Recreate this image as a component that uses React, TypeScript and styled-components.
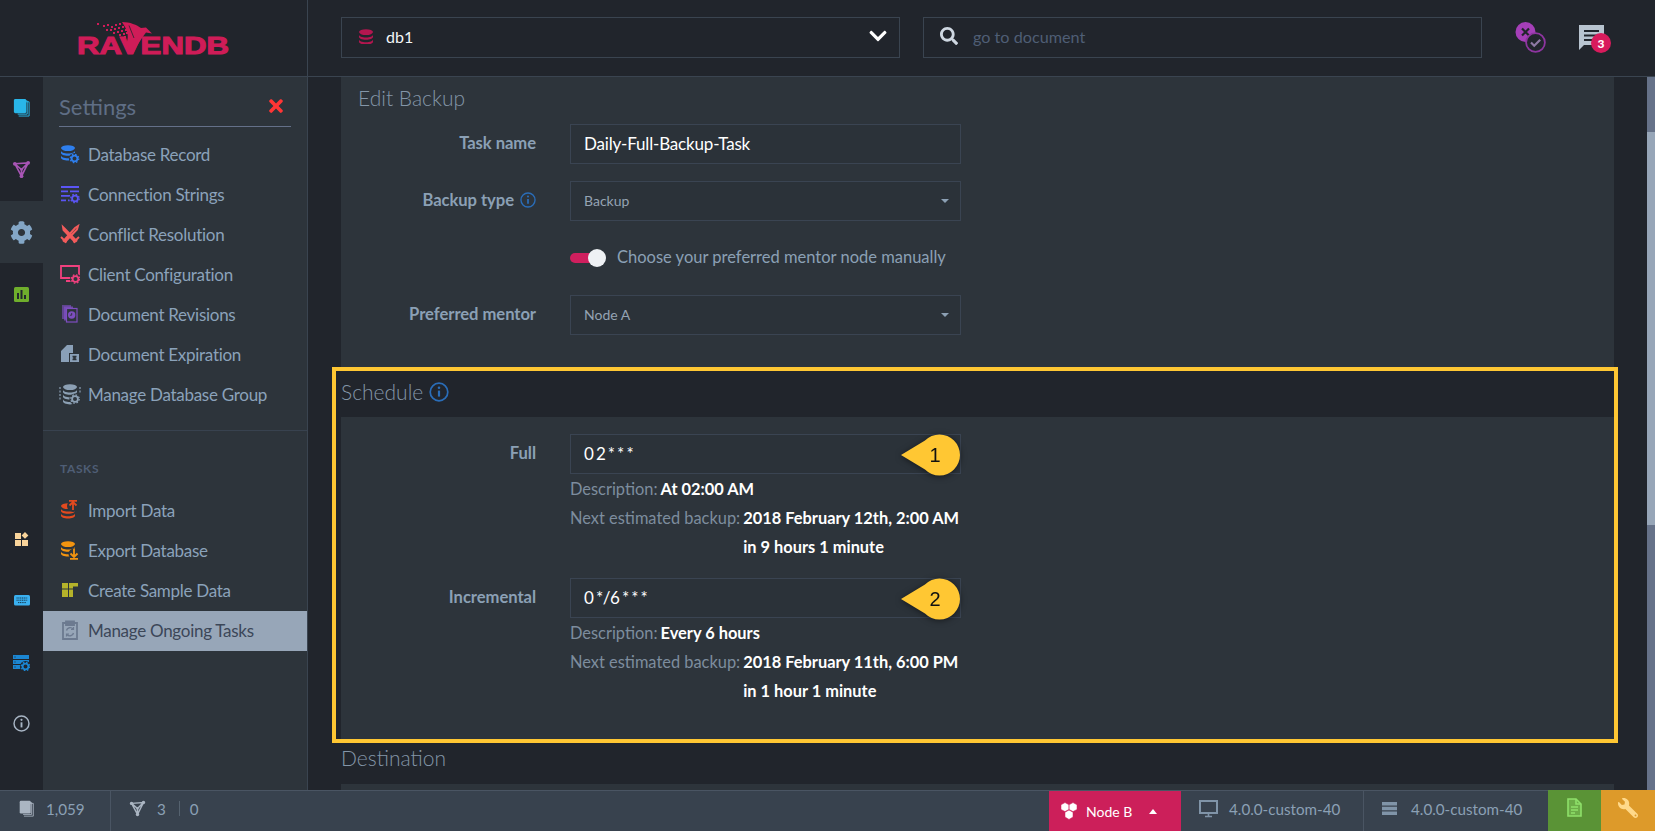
import React from 'react';
import styled, { createGlobalStyle } from 'styled-components';
import { FaCog, FaSearch, FaWrench, FaChevronDown, FaTimes } from 'react-icons/fa';

const dark = '#21252c';
const panel = '#2d343b';
const line = '#3a4450';
const bar = '#38424e';

const GlobalStyle = createGlobalStyle`
  html, body {
    margin: 0;
    height: 100%;
    overflow: hidden;
    background: ${dark};
    font-family: Lato, "Liberation Sans", sans-serif;
  }
  * { box-sizing: border-box; }
`;

const Page = styled.div`
  display: flex;
  flex-direction: column;
  height: 831px;
  width: 1655px;
`;

const TopBar = styled.header`
  display: flex;
  height: 77px;
  flex: none;
  border-bottom: 1px solid ${line};
`;

const LogoBox = styled.div`
  width: 308px;
  flex: none;
  border-right: 1px solid ${line};
`;

const TopTools = styled.div`
  flex: 1;
  display: flex;
  gap: 23px;
  padding: 17px 0 0 33px;
`;

const TopField = styled.div`
  width: 559px;
  height: 41px;
  display: flex;
  align-items: center;
  border: 1px solid ${line};
  padding-bottom: 3px;
`;

const DbName = styled.span`
  flex: 1;
  color: #f4f6f8;
  font-size: 16px;
  padding-left: 12px;
`;

const SearchText = styled.span`
  color: #4f5e75;
  font-size: 16.2px;
  padding-left: 15px;
`;

const Chevron = styled(FaChevronDown)`
  color: #fff;
  font-size: 20px;
  margin-right: 11px;
`;

const SearchIcon = styled(FaSearch)`
  color: #cfd8e2;
  font-size: 18px;
  margin-left: 16px;
`;

const TopIcons = styled.div`
  display: flex;
  align-items: flex-start;
  gap: 32px;
  padding: 4px 0 0 8px;
`;

const BubbleWrap = styled.div`
  position: relative;
  width: 32px;
  height: 28px;
  margin-top: 4px;
`;

const Badge = styled.span`
  position: absolute;
  right: 0;
  bottom: 0;
  width: 20px;
  height: 20px;
  border-radius: 50%;
  background: #d81b5c;
  color: #fff;
  font-size: 12px;
  font-weight: 900;
  display: flex;
  align-items: center;
  justify-content: center;
`;

const Middle = styled.div`
  flex: 1;
  min-height: 0;
  display: flex;
`;

const Rail = styled.nav`
  width: 43px;
  flex: none;
  display: flex;
  flex-direction: column;
  background: ${dark};
`;

const RailItem = styled.div<{ $active?: boolean; $h?: number }>`
  height: ${p => p.$h ?? 62}px;
  flex: none;
  display: flex;
  align-items: center;
  justify-content: center;
  background: ${p => (p.$active ? panel : 'transparent')};
  color: #83a6c6;
  font-size: 23px;
`;

const RailGap = styled.div`
  height: 183px;
  flex: none;
`;

const SubMenu = styled.aside`
  width: 265px;
  flex: none;
  background: ${panel};
  border-right: 1px solid ${line};
  padding-top: 17px;
`;

const MenuHead = styled.div`
  display: flex;
  align-items: center;
  justify-content: space-between;
  height: 33px;
  margin: 0 16px;
  border-bottom: 1px solid #647089;
  padding: 0 5px 8px 0;
  color: #5f6e85;
  font-size: 22px;
`;

const CloseIcon = styled(FaTimes)`
  color: #ff3535;
  font-size: 20px;
`;

const MenuList = styled.div`
  padding-top: 8px;
`;

const MenuItem = styled.div<{ $active?: boolean }>`
  height: 40px;
  display: flex;
  align-items: center;
  gap: 8px;
  padding: 0 0 2px 16px;
  font-size: 17px;
  letter-spacing: -0.28px;
  color: ${p => (p.$active ? '#3c4758' : '#8ba2ba')};
  background: ${p => (p.$active ? '#97a6b8' : 'transparent')};
`;

const MenuIconSlot = styled.span`
  width: 21px;
  flex: none;
  display: flex;
  justify-content: center;
`;

const MenuDivider = styled.div`
  height: 1px;
  background: #38424f;
  margin-top: 15px;
`;

const MenuLabel = styled.div`
  font-size: 12px;
  font-weight: 700;
  letter-spacing: 0.6px;
  color: #4f5e75;
  padding: 31px 0 15px 17px;
  line-height: 14px;
`;

const Main = styled.main`
  flex: 1;
  min-width: 0;
  padding: 0 33px;
  overflow: hidden;
`;

const Panel = styled.section<{ $pad: string }>`
  background: ${panel};
  padding: ${p => p.$pad};
`;

const PanelTitle = styled.h2`
  margin: 0 0 13px;
  font-size: 21px;
  font-weight: 300;
  line-height: 26px;
  color: #8496a8;
`;

const Highlight = styled.div`
  margin: 0 -4px 0 -9px;
  padding-left: 5px;
  border: 4px solid #ffc733;
`;

const SectionHead = styled.div<{ $h: number; $pb: number }>`
  height: ${p => p.$h}px;
  display: flex;
  align-items: center;
  gap: 6px;
  padding-bottom: ${p => p.$pb}px;
  font-size: 21px;
  font-weight: 300;
  color: #8496a8;
`;

const Rows = styled.div`
  display: flex;
  flex-direction: column;
  gap: 17px;
`;

const Row = styled.div`
  display: grid;
  grid-template-columns: 178px 391px;
  column-gap: 34px;
`;

const RowLabel = styled.label`
  display: flex;
  justify-content: flex-end;
  align-items: center;
  gap: 6px;
  height: 37px;
  color: #8ba0b5;
  font-size: 16.6px;
  font-weight: 700;
  letter-spacing: -0.05px;
  grid-column: 1;
`;

const Field = styled.div<{ $large?: boolean }>`
  position: relative;
  height: 40px;
  display: flex;
  align-items: center;
  justify-content: space-between;
  padding: 0 11px 1px 13px;
  border: 1px solid #3a4452;
  background: #2b3239;
  grid-column: 2;
  color: ${p => (p.$large ? '#fff' : '#95a3b3')};
  font-size: ${p => (p.$large ? 17 : 14)}px;
  letter-spacing: ${p => (p.$large ? '-0.18px' : '0')};
`;

const Cron = styled.span`
  letter-spacing: -0.35px;
  word-spacing: -1.6px;
`;

const Caret = styled.i`
  width: 0;
  height: 0;
  border-left: 4.5px solid transparent;
  border-right: 4.5px solid transparent;
  border-top: 4.5px solid #8ca0b4;
`;

const ToggleRow = styled.div`
  grid-column: 2;
  height: 40px;
  display: flex;
  align-items: center;
  gap: 11px;
  color: #8ba0b5;
  font-size: 16.5px;
`;

const ToggleLabel = styled.span`
  padding-bottom: 2px;
`;

const ToggleTrack = styled.span`
  position: relative;
  width: 36px;
  height: 10px;
  flex: none;
  &::before {
    content: '';
    position: absolute;
    left: 0;
    top: 0;
    width: 26px;
    height: 10px;
    border-radius: 5px;
    background: #cf1f5e;
  }
`;

const ToggleKnob = styled.span`
  position: absolute;
  right: 0;
  top: -4px;
  width: 18px;
  height: 18px;
  border-radius: 50%;
  background: #eef1f4;
`;

const Notes = styled.div`
  grid-column: 2;
  font-size: 16.4px;
  line-height: 29px;
  color: #7d8d9e;
  white-space: nowrap;
`;

const NoteLine = styled.div`
  display: flex;
  gap: 3px;
`;

const NoteValue = styled.b`
  color: #fff;
  font-weight: 700;
`;

const Callout = styled.div`
  position: absolute;
  right: -2px;
  top: -1px;
  width: 62px;
  height: 42px;
  filter: drop-shadow(0 1px 3px rgba(0, 0, 0, 0.5));
`;

const CalloutNum = styled.span`
  position: absolute;
  left: 29px;
  top: 0;
  width: 12px;
  text-align: center;
  line-height: 42px;
  font-family: "Liberation Sans", sans-serif;
  font-size: 20px;
  color: #111;
`;

const BottomBar = styled.footer`
  height: 41px;
  flex: none;
  display: flex;
  background: ${bar};
  border-top: 1px solid #4a5563;
  color: #8ba0b5;
  font-size: 15.2px;
`;

const Stat = styled.div<{ $w: number; $gap?: number; $noBorder?: boolean }>`
  width: ${p => p.$w}px;
  flex: none;
  display: flex;
  align-items: center;
  gap: ${p => p.$gap ?? 11}px;
  padding-left: 18px;
  padding-bottom: 5px;
  border-right: ${p => (p.$noBorder ? 'none' : '1px solid #4a5563')};
`;

const StatSep = styled.span`
  width: 1px;
  height: 15px;
  background: #55626f;
  margin: 0 -1px 0 2px;
`;

const Spacer = styled.div`
  flex: 1;
`;

const NodeTab = styled.div`
  width: 132px;
  flex: none;
  display: flex;
  align-items: center;
  gap: 8px;
  padding-left: 11px;
  background: #cc1f5a;
  color: #fff;
  font-size: 14px;
`;

const NodeCaret = styled.i`
  width: 0;
  height: 0;
  margin-left: 9px;
  border-left: 4.5px solid transparent;
  border-right: 4.5px solid transparent;
  border-bottom: 5px solid #fff;
`;

const ActionTab = styled.div<{ $bg: string; $fg: string; $w: number }>`
  width: ${p => p.$w}px;
  flex: none;
  margin-top: -1px;
  display: flex;
  align-items: center;
  justify-content: center;
  padding-bottom: 6px;
  background: ${p => p.$bg};
  color: ${p => p.$fg};
  font-size: 20px;
`;

const MirroredWrench = styled(FaWrench)`
  transform: scaleX(-1);
`;

const Scrollbar = styled.div`
  width: 8px;
  flex: none;
  background: #667289;
  padding-top: 55px;
`;

const ScrollThumb = styled.div`
  height: 393px;
  background: #97a6b8;
`;

const Glyph = styled.svg<{ $c: string; $w?: number }>`
  width: ${p => p.$w ?? 20}px;
  height: ${p => p.$w ?? 20}px;
  flex: none;
  display: block;
  color: ${p => p.$c};
`;

const DbGlyph = styled(Glyph)`
  margin-left: 16px;
`;

type IconProps = { c: string; w?: number };

const Cog = ({ x, y, bg = panel }: { x: number; y: number; bg?: string }) => (
  <g>
    <circle cx={x} cy={y} r={5.6} fill={bg} />
    <circle cx={x} cy={y} r={2.9} fill="none" stroke="currentColor" strokeWidth={1.8} />
    <circle cx={x} cy={y} r={4.2} fill="none" stroke="currentColor" strokeWidth={1.3} strokeDasharray="1.6 1.7" />
  </g>
);

const Discs = ({ n = 3, top = 1.5 }: { n?: number; top?: number }) => (
  <g fill="currentColor">
    <ellipse cx={8} cy={top + 2.6} rx={7} ry={2.9} />
    {Array.from({ length: n - 1 }).map((_, i) => {
      const y = top + 5.2 + i * 4.8;
      return <path key={i} d={`M1 ${y}c0 1.6 3 2.8 7 2.8s7-1.2 7-2.8v2.3c0 1.6-3 2.8-7 2.8s-7-1.2-7-2.8z`} />;
    })}
  </g>
);

const DocsIcon = ({ c, w }: IconProps) => (
  <Glyph $c={c} $w={w} viewBox="0 0 20 20">
    <path d="M6 4h12v15H7" fill="none" stroke="currentColor" strokeWidth={1} />
    <path d="M5 3h11v14H6" fill="none" stroke="currentColor" strokeWidth={1} />
    <rect x={2} y={1} width={13} height={15} rx={1.5} fill="currentColor" />
  </Glyph>
);

const ClusterIcon = ({ c, w }: IconProps) => (
  <Glyph $c={c} $w={w} viewBox="0 0 20 20" fill="none">
    <path d="M3 4l14-1-7 14zM3 4l7 6 7-7M10 10v7" stroke="currentColor" strokeWidth={1.7} />
    <circle cx={3} cy={4} r={2} fill="currentColor" />
    <circle cx={17} cy={3} r={2} fill="currentColor" />
    <circle cx={10} cy={17} r={2} fill="currentColor" />
    <circle cx={10} cy={10} r={1.4} fill="currentColor" />
  </Glyph>
);

const StatsIcon = () => (
  <Glyph $c="#6fae2c" $w={15} viewBox="0 0 15 15">
    <rect width={15} height={15} rx={1.5} fill="currentColor" />
    <path d="M3 6h2v6H3zM6.500 3h2v9h-2zM10 8h2v4h-2z" fill="#23282e" />
  </Glyph>
);

const AppsIcon = () => (
  <Glyph $c="#f9d49b" $w={15} viewBox="0 0 15 15" fill="currentColor">
    <rect x={1} y={2} width={6} height={6} />
    <rect x={1} y={9} width={6} height={6} />
    <rect x={8} y={9} width={6} height={6} />
    <path d="M11 1l3.400 3.400L11 7.800 7.600 4.400z" />
  </Glyph>
);

const KeyboardIcon = () => (
  <Glyph $c="#3ab0f0" $w={16} viewBox="0 0 16 16">
    <rect y={3} width={16} height={10.5} rx={1.5} fill="currentColor" />
    <path d="M2.500 6h11M2.500 8.200h11M4 10.600h8" stroke="#15384f" strokeWidth={1} strokeDasharray="1.2 .6" />
  </Glyph>
);

const ServerCogIcon = () => (
  <Glyph $c="#1b86d2" $w={17} viewBox="0 0 17 17" fill="currentColor">
    <rect x={0} y={1} width={16} height={4} />
    <rect x={0} y={6} width={16} height={4} />
    <rect x={0} y={11} width={10} height={4} />
    <path d="M1.500 3h1M1.500 8h1M1.500 13h1" stroke={dark} />
    <Cog x={12.5} y={12.5} bg={dark} />
  </Glyph>
);

const InfoIcon = ({ c, w }: IconProps) => (
  <Glyph $c={c} $w={w} viewBox="0 0 20 20" fill="none">
    <circle cx={10} cy={10} r={8.8} stroke="currentColor" strokeWidth={1.7} />
    <path d="M10 8.600v6" stroke="currentColor" strokeWidth={2.2} />
    <circle cx={10} cy={5.7} r={1.3} fill="currentColor" />
  </Glyph>
);

const DbCogIcon = ({ c }: IconProps) => (
  <Glyph $c={c} viewBox="0 0 20 20">
    <Discs />
    <Cog x={14.5} y={14.5} />
  </Glyph>
);

const ConnStringsIcon = ({ c }: IconProps) => (
  <Glyph $c={c} viewBox="0 0 20 20" fill="currentColor">
    <path d="M1 2h18v2H1zM1 6.500h7v1.800H1zM10 6.500h9v1.800h-9zM1 11h9v1.800H1zM1 15.500h5v1.800H1zM8 15.500h1.800v1.800H8z" />
    <Cog x={15} y={14.5} />
  </Glyph>
);

const SwordsIcon = ({ c }: IconProps) => (
  <Glyph $c={c} viewBox="0 0 20 20" fill="none" stroke="currentColor" strokeWidth={1.9}>
    <path d="M3 17.500L15 4l3-2-1 3.500L4.500 18.500M1 13l5.500 5.500" />
    <path d="M17 17.500L5 5 3 3l.5 3L15.500 18.500M19 13l-5.500 5.500" />
  </Glyph>
);

const MonitorCogIcon = ({ c }: IconProps) => (
  <Glyph $c={c} viewBox="0 0 20 20">
    <path d="M1 2h18v12H1z" fill="none" stroke="currentColor" strokeWidth={1.8} />
    <path d="M6 17h6" stroke="currentColor" strokeWidth={2} />
    <Cog x={15.5} y={15} />
  </Glyph>
);

const RevisionsIcon = ({ c }: IconProps) => (
  <Glyph $c={c} viewBox="0 0 20 20">
    <path d="M2 1h9v14H2z" fill="currentColor" opacity={0.65} />
    <path d="M4 2.500h9v14H4z" fill="currentColor" opacity={0.8} />
    <rect x={6.5} y={4.5} width={10.5} height={13.5} fill={panel} stroke="currentColor" strokeWidth={1.2} />
    <circle cx={11.7} cy={11} r={3.7} fill="currentColor" />
    <path d="M11.700 9v2.200h-1.800" stroke={panel} strokeWidth={0.9} fill="none" />
  </Glyph>
);

const ExpirationIcon = ({ c }: IconProps) => (
  <Glyph $c={c} viewBox="0 0 20 20" fill="currentColor">
    <path d="M7 1h6v8H9v9H1V7zM5 5l2-2v3H5z" />
    <path d="M10 10h9v8h-9z" />
    <path d="M12.500 11.700h4v1.600l-1.200 .7 1.200 .7v1.600h-4v-1.600l1.200-.7-1.200-.7z" fill={panel} />
  </Glyph>
);

const GroupIcon = ({ c }: IconProps) => (
  <Glyph $c={c} $w={22} viewBox="0 0 22 20">
    <path d="M1 3v13M21 3v6" stroke="currentColor" strokeWidth={1.2} strokeDasharray="2 1.5" />
    <g transform="translate(3 0)">
      <Discs n={4} top={0.5} />
    </g>
    <Cog x={16} y={15} />
  </Glyph>
);

const ImportIcon = ({ c }: IconProps) => (
  <Glyph $c={c} viewBox="0 0 20 20">
    <g transform="translate(0 2)">
      <Discs />
    </g>
    <circle cx={13} cy={6} r={6} fill={panel} />
    <path d="M13 10V3M9.500 5.500L13 2l3.500 3.500M9 .8h8" stroke="currentColor" strokeWidth={1.8} fill="none" />
  </Glyph>
);

const ExportIcon = ({ c }: IconProps) => (
  <Glyph $c={c} viewBox="0 0 20 20">
    <Discs />
    <circle cx={14} cy={14} r={5.5} fill={panel} />
    <path d="M14 9v7M10.500 13.500L14 17l3.500-3.500M10 18.800h8" stroke="currentColor" strokeWidth={1.8} fill="none" />
  </Glyph>
);

const SampleIcon = ({ c }: IconProps) => (
  <Glyph $c={c} viewBox="0 0 20 20" fill="currentColor">
    <path d="M2 3h6v5.500H2zM2 9.500h6V17H2zM9 9.500h4V17H9zM9 3h9v3.500h-5V8.500H9z" />
  </Glyph>
);

const ClipboardIcon = ({ c }: IconProps) => (
  <Glyph $c={c} viewBox="0 0 20 20" fill="none" stroke="currentColor" strokeWidth={1.8}>
    <path d="M6 3H3v16h14V3h-3" />
    <path d="M6 1.500h8V5H6z" fill="currentColor" />
    <path d="M6.500 10.500a3.700 3.700 0 016.500-1.500M13.500 13a3.700 3.700 0 01-6.500 1.500" strokeWidth={1.4} />
    <path d="M13.500 7v2.500H11M6.500 16.500V14H9" strokeWidth={1.2} />
  </Glyph>
);

const MonitorIcon = ({ c }: IconProps) => (
  <Glyph $c={c} $w={19} viewBox="0 0 19 19" fill="none" stroke="currentColor">
    <path d="M1 2h17v12H1z" strokeWidth={2} />
    <path d="M9.500 14v3M6 17.500h7" strokeWidth={1.6} />
  </Glyph>
);

const ServerIcon = ({ c }: IconProps) => (
  <Glyph $c={c} $w={15} viewBox="0 0 15 15" fill="currentColor">
    <path d="M0 1h15v3.600H0zM0 5.700h15v3.600H0zM0 10.400h15V14H0z" />
  </Glyph>
);

const NodesIcon = () => (
  <Glyph $c="#fff" $w={18} viewBox="0 0 18 18" fill="currentColor">
    <path d="M5 .6l4 2.200v4.600l-4 2.200-4-2.200V2.800zM13 .6l4 2.200v4.600l-4 2.200-4-2.200V2.800zM9 8l4 2.200v4.800l-4 2.400-4-2.400v-4.800z" stroke="#cc1f5a" strokeWidth={0.5} />
  </Glyph>
);

const DocFileIcon = ({ c }: IconProps) => (
  <Glyph $c={c} $w={19} viewBox="0 0 19 19" fill="none" stroke="currentColor" strokeWidth={1.6}>
    <path d="M3 1h8l5 5v12H3z" fill="currentColor" fillOpacity={0.35} />
    <path d="M11 1v5h5M6 9h7M6 12h7M6 15h4" />
  </Glyph>
);

const XCheckIcon = () => (
  <Glyph $c="#a53fb8" $w={34} viewBox="0 0 34 34">
    <circle cx={12.5} cy={11} r={10} fill="currentColor" />
    <path d="M9 7.500l7 7M16 7.500l-7 7" stroke={dark} strokeWidth={2.2} />
    <circle cx={22.5} cy={21.5} r={9.4} fill={dark} stroke="#8e35a0" strokeWidth={1.8} />
    <path d="M18 21.500l3.200 3.200 6-6" fill="none" stroke="#8f7aa5" strokeWidth={2.2} />
  </Glyph>
);

const CommentIcon = () => (
  <Glyph $c="#b8c4d0" $w={25} viewBox="0 0 25 25">
    <path d="M0 0h25v20H5l-5 5z" fill="currentColor" />
    <path d="M5 6h15M5 10.500h15M5 15h11" stroke={dark} strokeWidth={2} />
  </Glyph>
);

const Logo = () => (
  <svg width="307" height="76" viewBox="0 0 307 76">
    <g fill="#cf1c58">
      <path d="M122 22C130 22 137 25 141 28L146 27.500 152 33.500 146 32.500C143 36 140 41 137 46L133 54 126 44C129 38 128 32 125 27z" />
      <path d="M129 25.500L134 38" stroke="#21252c" strokeWidth={0.8} fill="none" />
      {[
        [97, 23], [103, 25], [107, 24], [111, 26], [115, 24], [119, 23], [106, 29], [110, 29], [114, 28], [118, 27],
        [122, 26], [113, 32], [117, 31], [121, 30], [125, 29], [119, 34], [123, 33], [126, 32], [124, 36], [121, 37],
      ].map(([x, y]) => (
        <rect key={`${x}-${y}`} x={x} y={y} width={2} height={2} />
      ))}
      <text
        x={77}
        y={54}
        textLength={152}
        lengthAdjust="spacingAndGlyphs"
        fontFamily="'Liberation Sans', sans-serif"
        fontWeight={700}
        fontSize={23}
        stroke="#cf1c58"
        strokeWidth={1}
      >
        RAVENDB
      </text>
    </g>
  </svg>
);

const Bubble = ({ n }: { n: number }) => (
  <Callout>
    <svg width="62" height="42" viewBox="0 0 62 42">
      <path d="M1 21L25 6.500A20.500 20.500 0 1 1 25 35.500z" fill="#ffc733" />
    </svg>
    <CalloutNum>{n}</CalloutNum>
  </Callout>
);

const settingsItems = [
  { label: 'Database Record', icon: <DbCogIcon c="#2e7fee" /> },
  { label: 'Connection Strings', icon: <ConnStringsIcon c="#5b55f5" /> },
  { label: 'Conflict Resolution', icon: <SwordsIcon c="#f25b5b" /> },
  { label: 'Client Configuration', icon: <MonitorCogIcon c="#f0407e" /> },
  { label: 'Document Revisions', icon: <RevisionsIcon c="#7d4ec0" /> },
  { label: 'Document Expiration', icon: <ExpirationIcon c="#8aa0b8" /> },
  { label: 'Manage Database Group', icon: <GroupIcon c="#8ca0b4" /> },
];

const taskItems = [
  { label: 'Import Data', icon: <ImportIcon c="#e34a1f" /> },
  { label: 'Export Database', icon: <ExportIcon c="#f29410" /> },
  { label: 'Create Sample Data', icon: <SampleIcon c="#b5b32a" /> },
  { label: 'Manage Ongoing Tasks', icon: <ClipboardIcon c="#6c7a90" />, active: true },
];

const schedules = [
  {
    label: 'Full',
    cron: '0 2 * * *',
    description: 'At 02:00 AM',
    next: '2018 February 12th, 2:00 AM',
    remaining: 'in 9 hours 1 minute',
  },
  {
    label: 'Incremental',
    cron: '0 */6 * * *',
    description: 'Every 6 hours',
    next: '2018 February 11th, 6:00 PM',
    remaining: 'in 1 hour 1 minute',
  },
];

const App: React.FC = () => (
  <Page>
    <GlobalStyle />
    <TopBar>
      <LogoBox>
        <Logo />
      </LogoBox>
      <TopTools>
        <TopField>
          <DbGlyph $c="#b3164f" $w={16} viewBox="0 0 16 16">
            <Discs />
          </DbGlyph>
          <DbName>db1</DbName>
          <Chevron />
        </TopField>
        <TopField>
          <SearchIcon />
          <SearchText>go to document</SearchText>
        </TopField>
        <TopIcons>
          <XCheckIcon />
          <BubbleWrap>
            <CommentIcon />
            <Badge>3</Badge>
          </BubbleWrap>
        </TopIcons>
      </TopTools>
    </TopBar>

    <Middle>
      <Rail>
        <RailItem $h={61}>
          <DocsIcon c="#29b6e8" w={19} />
        </RailItem>
        <RailItem $h={63}>
          <ClusterIcon c="#a855b5" w={19} />
        </RailItem>
        <RailItem $active>
          <FaCog />
        </RailItem>
        <RailItem>
          <StatsIcon />
        </RailItem>
        <RailGap />
        <RailItem $h={61}>
          <AppsIcon />
        </RailItem>
        <RailItem $h={62}>
          <KeyboardIcon />
        </RailItem>
        <RailItem $h={62}>
          <ServerCogIcon />
        </RailItem>
        <RailItem $h={61}>
          <InfoIcon c="#a8b5c4" w={17} />
        </RailItem>
      </Rail>

      <SubMenu>
        <MenuHead>
          Settings
          <CloseIcon />
        </MenuHead>
        <MenuList>
          {settingsItems.map(item => (
            <MenuItem key={item.label}>
              <MenuIconSlot>{item.icon}</MenuIconSlot>
              {item.label}
            </MenuItem>
          ))}
        </MenuList>
        <MenuDivider />
        <MenuLabel>TASKS</MenuLabel>
        {taskItems.map(item => (
          <MenuItem key={item.label} $active={item.active}>
            <MenuIconSlot>{item.icon}</MenuIconSlot>
            {item.label}
          </MenuItem>
        ))}
      </SubMenu>

      <Main>
        <Panel $pad="8px 0 32px 17px">
          <PanelTitle>Edit Backup</PanelTitle>
          <Rows>
            <Row>
              <RowLabel>Task name</RowLabel>
              <Field $large>Daily-Full-Backup-Task</Field>
            </Row>
            <Row>
              <RowLabel>
                Backup type
                <InfoIcon c="#2a6db8" w={16} />
              </RowLabel>
              <Field>
                Backup
                <Caret />
              </Field>
            </Row>
            <Row>
              <ToggleRow>
                <ToggleTrack>
                  <ToggleKnob />
                </ToggleTrack>
                <ToggleLabel>Choose your preferred mentor node manually</ToggleLabel>
              </ToggleRow>
            </Row>
            <Row>
              <RowLabel>Preferred mentor</RowLabel>
              <Field>
                Node A
                <Caret />
              </Field>
            </Row>
          </Rows>
        </Panel>

        <Highlight>
          <SectionHead $h={46} $pb={5}>
            Schedule
            <InfoIcon c="#2a6db8" w={20} />
          </SectionHead>
          <Panel $pad="17px 0 34px 17px">
            <Rows>
              {schedules.map((s, i) => (
                <Row key={s.label}>
                  <RowLabel>{s.label}</RowLabel>
                  <Field $large>
                    <Cron>{s.cron}</Cron>
                    <Bubble n={i + 1} />
                  </Field>
                  <Notes>
                    <NoteLine>
                      Description: <NoteValue>{s.description}</NoteValue>
                    </NoteLine>
                    <NoteLine>
                      Next estimated backup:
                      <div>
                        <NoteValue>{s.next}</NoteValue>
                        <div>
                          <NoteValue>{s.remaining}</NoteValue>
                        </div>
                      </div>
                    </NoteLine>
                  </Notes>
                </Row>
              ))}
            </Rows>
          </Panel>
        </Highlight>

        <SectionHead $h={41} $pb={13}>Destination</SectionHead>
        <Panel $pad="40px 0 0" />
      </Main>

      <Scrollbar>
        <ScrollThumb />
      </Scrollbar>
    </Middle>

    <BottomBar>
      <Stat $w={111}>
        <DocsIcon c="#aab5c2" w={17} />
        1,059
      </Stat>
      <Stat $w={120} $noBorder>
        <ClusterIcon c="#aab5c2" w={17} />3
        <StatSep />0
      </Stat>
      <Spacer />
      <NodeTab>
        <NodesIcon />
        Node B
        <NodeCaret />
      </NodeTab>
      <Stat $w={183}>
        <MonitorIcon c="#8094a8" />
        4.0.0-custom-40
      </Stat>
      <Stat $w={184} $gap={14} $noBorder>
        <ServerIcon c="#8094a8" />
        4.0.0-custom-40
      </Stat>
      <ActionTab $bg="#5a9336" $fg="#8ee06a" $w={53}>
        <DocFileIcon c="#8ee06a" />
      </ActionTab>
      <ActionTab $bg="#dd9a2a" $fg="#ffd98a" $w={54}>
        <MirroredWrench />
      </ActionTab>
    </BottomBar>
  </Page>
);

export default App;
